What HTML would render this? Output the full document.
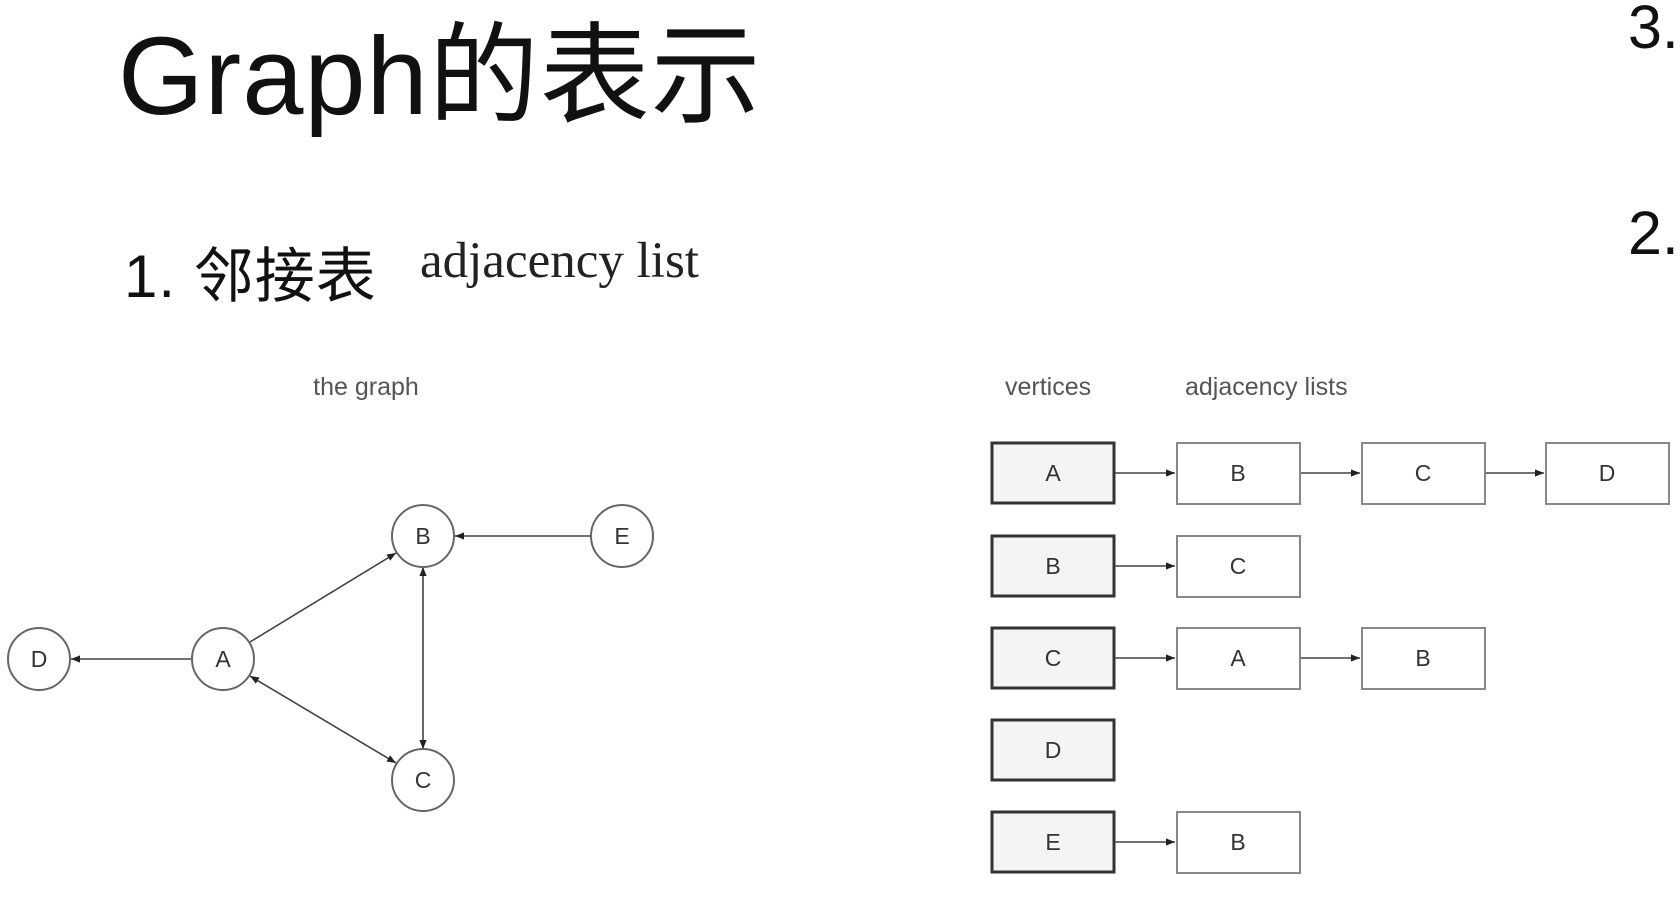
<!DOCTYPE html>
<html><head><meta charset="utf-8"><style>
html,body{margin:0;padding:0;background:#fff;width:1680px;height:900px;overflow:hidden;position:relative}
.t{position:absolute;white-space:nowrap;color:#111;font-family:"Liberation Sans","Noto Sans CJK SC",sans-serif;line-height:1}
</style></head><body>
<div class="t" style="left:118px;top:22px;font-size:110px;letter-spacing:1px;">Graph的表示</div>
<div class="t" style="left:1628px;top:-3px;font-size:61px;">3.</div>
<div class="t" style="left:1628px;top:203px;font-size:61px;">2.</div>
<div class="t" style="left:124px;top:247px;font-size:60px;letter-spacing:1px;">1. 邻接表</div>
<div class="t" style="left:420px;top:236px;font-size:51px;font-family:'Liberation Serif',serif;color:#222;">adjacency list</div>
<svg width="1680" height="900" style="position:absolute;left:0;top:0" font-family="Liberation Sans, sans-serif">
<defs><marker id="ar" viewBox="0 0 10 10" refX="10" refY="5" markerWidth="9" markerHeight="9" markerUnits="userSpaceOnUse" orient="auto-start-reverse"><path d="M0,1 L10,5 L0,9z" fill="#222"/></marker></defs>
<text x="366" y="395" font-size="25" fill="#555" text-anchor="middle">the graph</text>
<g stroke="#444" stroke-width="1.6" fill="none">
<line x1="592" y1="536" x2="455" y2="536" marker-end="url(#ar)"/>
<line x1="250" y1="642" x2="396" y2="553" marker-end="url(#ar)"/>
<line x1="193" y1="659" x2="71" y2="659" marker-end="url(#ar)"/>
<line x1="250" y1="676" x2="396" y2="763" marker-end="url(#ar)" marker-start="url(#ar)"/>
<line x1="423" y1="567" x2="423" y2="749" marker-end="url(#ar)" marker-start="url(#ar)"/>
</g>
<g stroke="#666" stroke-width="2" fill="#fff">
<circle cx="423" cy="536" r="31"/><circle cx="622" cy="536" r="31"/><circle cx="223" cy="659" r="31"/><circle cx="39" cy="659" r="31"/><circle cx="423" cy="780" r="31"/>
</g>
<g font-size="23" fill="#333" text-anchor="middle">
<text x="423" y="544">B</text><text x="622" y="544">E</text><text x="223" y="667">A</text><text x="39" y="667">D</text><text x="423" y="788">C</text>
</g>
<text x="1005" y="395" font-size="25" fill="#555">vertices</text>
<text x="1185" y="395" font-size="25" fill="#555">adjacency lists</text>
<g stroke="#333" stroke-width="3" fill="#f4f4f4">
<rect x="992" y="443" width="122" height="60"/><rect x="992" y="536" width="122" height="60"/><rect x="992" y="628" width="122" height="60"/><rect x="992" y="720" width="122" height="60"/><rect x="992" y="812" width="122" height="60"/>
</g>
<g stroke="#888" stroke-width="2" fill="#fff">
<rect x="1177" y="443" width="123" height="61"/><rect x="1362" y="443" width="123" height="61"/><rect x="1546" y="443" width="123" height="61"/>
<rect x="1177" y="536" width="123" height="61"/>
<rect x="1177" y="628" width="123" height="61"/><rect x="1362" y="628" width="123" height="61"/>
<rect x="1177" y="812" width="123" height="61"/>
</g>
<g stroke="#444" stroke-width="1.6">
<line x1="1115" y1="473" x2="1175" y2="473" marker-end="url(#ar)"/>
<line x1="1301" y1="473" x2="1360" y2="473" marker-end="url(#ar)"/>
<line x1="1486" y1="473" x2="1544" y2="473" marker-end="url(#ar)"/>
<line x1="1115" y1="566" x2="1175" y2="566" marker-end="url(#ar)"/>
<line x1="1115" y1="658" x2="1175" y2="658" marker-end="url(#ar)"/>
<line x1="1301" y1="658" x2="1360" y2="658" marker-end="url(#ar)"/>
<line x1="1115" y1="842" x2="1175" y2="842" marker-end="url(#ar)"/>
</g>
<g font-size="23" fill="#333" text-anchor="middle">
<text x="1053" y="481">A</text><text x="1238" y="481">B</text><text x="1423" y="481">C</text><text x="1607" y="481">D</text>
<text x="1053" y="574">B</text><text x="1238" y="574">C</text>
<text x="1053" y="666">C</text><text x="1238" y="666">A</text><text x="1423" y="666">B</text>
<text x="1053" y="758">D</text>
<text x="1053" y="850">E</text><text x="1238" y="850">B</text>
</g>
</svg>
</body></html>
